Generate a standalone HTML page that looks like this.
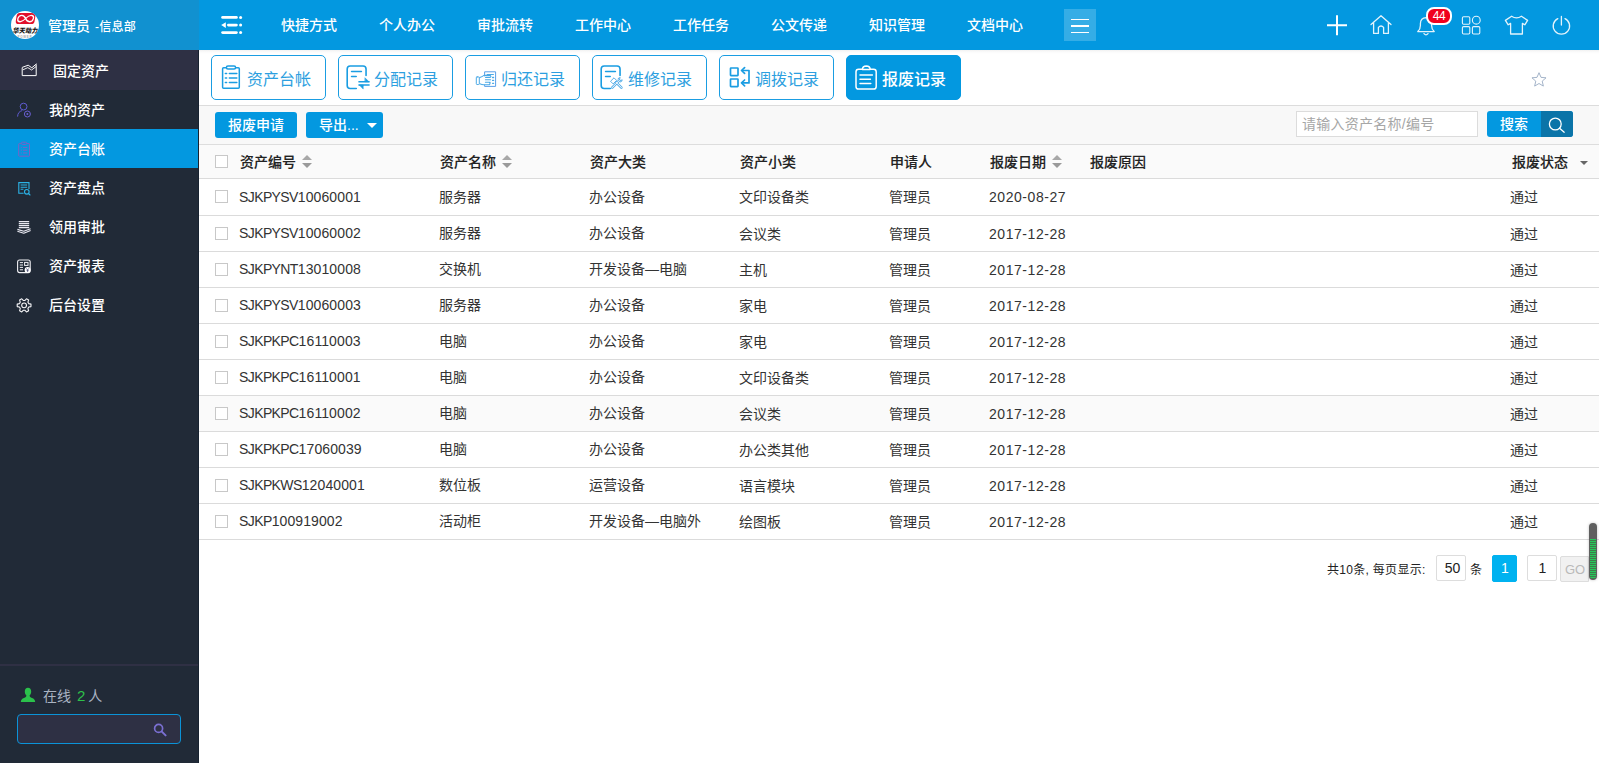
<!DOCTYPE html>
<html lang="zh-CN">
<head>
<meta charset="utf-8">
<title>固定资产 - 报废记录</title>
<style>
*{box-sizing:border-box;margin:0;padding:0}
html,body{width:1599px;height:763px;overflow:hidden;background:#fff}
body{font-family:"Liberation Sans","Noto Sans CJK SC",sans-serif;font-size:14px;color:#333;position:relative}
.abs{position:absolute}
/* sidebar */
#side{position:absolute;left:0;top:0;width:199px;height:763px;background:#212a37;font-weight:500}
#side .hd{position:absolute;left:0;top:0;width:199px;height:50px;background:#1191d0}
#side .logo{position:absolute;left:11px;top:11px;width:28px;height:28px;border-radius:50%;background:#fff;overflow:hidden}
#side .uname small{font-size:12px;margin-left:1px;letter-spacing:.3px}
#side .uname{position:absolute;left:48px;top:0;height:50px;line-height:52px;color:#fff;font-size:14px;white-space:nowrap}
#side .grp{position:absolute;left:0;top:50px;width:199px;height:40px;background:#2e3044;color:#fff}
#side .grp span{position:absolute;left:53px;top:0;line-height:43px;font-size:14px}
#side .it{position:absolute;left:0;width:199px;height:39px;color:#fff}
#side .it span{position:absolute;left:49px;top:0;line-height:41px;font-size:14px}
#side .it.on{background:#0398e0}
#side .it svg,#side .grp svg{position:absolute}
#side .sep{position:absolute;left:0;top:664px;width:198px;height:2px;background:#2f3044}
#side .edge{position:absolute;left:198px;top:50px;width:1px;height:713px;background:#172230}
#side .online{font-weight:normal;position:absolute;left:43px;top:685px;height:22px;line-height:22px;color:#a9b3c2;font-size:14px;white-space:nowrap}
#side .online b{color:#2ec14a;font-weight:normal;font-size:15px;margin:0 3px 0 6px}
#side .sbox{position:absolute;left:17px;top:714px;width:164px;height:30px;border:1px solid #0b93d8;border-radius:4px;background:#2e3044}
/* top bar */
#top{position:absolute;left:199px;top:0;width:1400px;height:50px;background:#0398e0;color:#fff}
#top .nav{position:absolute;top:0;height:50px;line-height:50px;font-size:14px;white-space:nowrap;font-weight:500}
#top .more{position:absolute;left:865px;top:9px;width:32px;height:32px;background:#35ade6}
#top .more b{position:absolute;left:6.6px;width:18.6px;height:1.8px;background:#fff}
.badge{position:absolute;left:1227px;top:7px;width:26px;height:18px;border:2px solid #fff;border-radius:8px;background:#f0001e;color:#fff;font-size:12px;line-height:14px;text-align:center;letter-spacing:-0.3px}
/* tab strip */
#tabs{position:absolute;left:199px;top:50px;width:1400px;height:56px;background:linear-gradient(to bottom,#f1f1f1 0,#fbfbfb 2px,#fff 4px) #fff;border-bottom:1px solid #dcdcdc}
.tb{position:absolute;top:5px;width:115px;height:45px;border:1px solid #1a9de2;border-radius:5px;color:#2d9fe0;font-size:16px;line-height:47px;white-space:nowrap;background:#fff}
.tb span{position:absolute;left:35px;top:0}
.tb svg{position:absolute}
.tb.on{font-weight:500;background:#0398e0;color:#fff;border-color:#0398e0}
/* toolbar */
#tool{position:absolute;left:199px;top:106px;width:1400px;height:39px;background:#f8f8f8;border-bottom:1px solid #dddddd}
.btn u{position:absolute;left:61px;top:11px;width:0;height:0;border-left:5px solid transparent;border-right:5px solid transparent;border-top:5px solid #fff}
.btn{font-weight:500;position:absolute;top:6px;height:26px;border-radius:3px;background:#0398e0;color:#fff;font-size:14px;line-height:26px;text-align:center;white-space:nowrap}
.sinp{letter-spacing:.25px;position:absolute;left:1097px;top:5px;width:182px;height:26px;border:1px solid #dcdcdc;background:#fff;color:#a6a6a6;font-size:14px;line-height:25px;padding-left:5px;white-space:nowrap}
.sbtn{position:absolute;left:1288px;top:5px;width:86px;height:26px;border-radius:3px;background:#0398e0;color:#fff;overflow:hidden}
.sbtn span{font-weight:500;position:absolute;left:13px;top:0;line-height:26px;font-size:14px}
.sbtn em{position:absolute;left:54px;top:0;width:32px;height:26px;background:#0b74a8}
/* grid */
#grid{position:absolute;left:199px;top:145px;width:1400px}
.row{position:absolute;left:0;width:1400px;height:36px;border-bottom:1px solid #dbdbdb;background:#fff;font-size:14px;line-height:36px;color:#333;white-space:nowrap}
.row.alt{background:#fafafa}
.row.h{height:34px;line-height:35px;background:#fafafa;font-weight:500;-webkit-text-stroke:0.12px #222;color:#222;top:0}
.row i{position:absolute;left:16px;top:11px;width:13px;height:13px;border:1px solid #c8c8c8;background:#fff}
.row.h i,.row.f i{top:10px}
.row.f{line-height:34px}
.row span{position:absolute;top:0}
.c1{left:40px;letter-spacing:.1px}
.c1 b{font-weight:normal;letter-spacing:-.6px}.c2{left:240px}.c3{left:390px}.c4{left:540px}.c5{left:690px}.c6{left:790px;letter-spacing:.55px}.c7{left:890px}.c8{left:1311px}
.row.h span{margin-left:1px;letter-spacing:0}
.row.h s{position:absolute;left:61.5px;top:10px;width:10px;height:13px;text-decoration:none}
.row.h s:before{content:"";position:absolute;left:0;top:0;border-left:5px solid transparent;border-right:5px solid transparent;border-bottom:5px solid #a8a8a8}
.row.h s:after{content:"";position:absolute;left:0;top:8px;border-left:5px solid transparent;border-right:5px solid transparent;border-top:5px solid #9a9a9a}
.row.h u{position:absolute;left:68px;top:16px;border-left:4.5px solid transparent;border-right:4.5px solid transparent;border-top:4.5px solid #666}
.row .c1,.row .c2,.row .c3{top:-1px}
.row.h .c1,.row.h .c2,.row.h .c3,.row.f .c1,.row.f .c2,.row.f .c3{top:0}
/* pager */
#pg{position:absolute;left:199px;top:540px;width:1400px;height:60px;font-size:13px;color:#222}
#pg span{position:absolute;white-space:nowrap}
.pbx{position:absolute;padding-left:1px;border:1px solid #dddddd;border-radius:2px;background:#fff;text-align:center;line-height:24px;font-size:14px;color:#222}
.pbx.cur{background:#00b2f0;border-color:#00b2f0;color:#fff;line-height:25px}
.pbx.go{background:#f1f1f1;border-color:#dddddd;color:#b9b9b9;font-size:13px;line-height:26px;border-radius:2px 0 0 2px}
#meter{position:absolute;left:1589px;top:523px;width:8px;height:57px;border-radius:4px;background:#5f5f5f;box-shadow:0 0 3px rgba(0,0,0,.25)}
#meter div{position:absolute;left:1px;top:16px;width:6px;height:40px;border-radius:0 0 3px 3px;background:repeating-linear-gradient(to bottom,#25c85a 0,#25c85a 1px,#3f7a4c 1px,#3f7a4c 2px)}
</style>
</head>
<body>
<div id="side">
  <div class="hd">
    <div class="logo"><svg width="28" height="28" viewBox="0 0 28 28">
      <path d="M8.6 1.9 H21.6 Q24.9 1.9 24.4 5 L23.6 10.2 Q23.1 13.1 20.2 13.1 H7.4 Q4.3 13.1 4.8 10 L5.6 4.8 Q6.1 1.9 8.6 1.9 Z" fill="#e10f2b"/>
      <path transform="translate(14.6 7.5) skewX(-14) translate(-14.6 -7.5)" d="M14.6 7.5 C12.8 4.8 11.6 4.3 10 4.3 C8.2 4.3 6.9 5.7 6.9 7.5 C6.9 9.3 8.2 10.7 10 10.7 C11.6 10.7 12.8 10.2 14.6 7.5 C16.4 4.8 17.8 4.3 19.3 4.3 C21.1 4.3 22.4 5.7 22.4 7.5 C22.4 9.3 21.1 10.7 19.3 10.7 C17.8 10.7 16.4 10.2 14.6 7.5 Z" fill="none" stroke="#fff" stroke-width="1.35"/>
      <text transform="translate(14 21.9) scale(0.52 0.56) skewX(-12)" text-anchor="middle" font-family="'Liberation Sans','Noto Sans CJK SC',sans-serif" font-weight="900" font-size="12" fill="#111">华天动力</text>
      <text transform="translate(14 27) scale(0.25)" text-anchor="middle" font-family="'Liberation Sans',sans-serif" font-weight="bold" font-size="12" letter-spacing="3" fill="#a8a8a8">POWER</text>
    </svg></div>
    <div class="uname">管理员 <small>-信息部</small></div>
  </div>
  <div class="grp"><svg style="left:18px;top:10px" width="24" height="20" viewBox="0 0 24 20" fill="none" stroke="#fff" stroke-width="1" stroke-linejoin="round">
      <path d="M4.2 7.6 V15.6 H18.2 V4.4"/>
      <path d="M4.2 7.4 L10.2 5.2 L13.8 7.8 L18.6 3.8"/>
      <path d="M5 9.8 L9.8 7.6 L13.6 10 L18 6.6" stroke-width="0.9"/>
    </svg><span>固定资产</span></div>
  <div class="it" style="top:90px"><svg style="left:14px;top:8px" width="24" height="24" viewBox="0 0 24 24" fill="none" stroke="#5f5bd0" stroke-width="1">
      <circle cx="9.6" cy="8.6" r="3.4"/>
      <path d="M3.6 18.6 Q3.8 13.6 8.2 12.6"/>
      <circle cx="13.4" cy="16" r="3" stroke="#6a5fd2"/>
      <circle cx="13.4" cy="16" r="1" fill="#6a5fd2" stroke="none"/>
    </svg><span>我的资产</span></div>
  <div class="it on" style="top:129px"><svg style="left:14px;top:8px" width="24" height="24" viewBox="0 0 24 24" fill="none" stroke="#7a62c6" stroke-width="1">
      <rect x="4.7" y="6.6" width="10.8" height="12.6" rx="0.6"/>
      <rect x="7.4" y="5.2" width="5.4" height="2.2" rx="1.1" fill="#0398e0"/>
      <path d="M6.8 10.4 H7.8 M9 10.4 H13.4 M6.8 13.2 H7.8 M9 13.2 H13.4 M6.8 16 H7.8 M9 16 H13.4"/>
    </svg><span>资产台账</span></div>
  <div class="it" style="top:168px"><svg style="left:14px;top:8px" width="24" height="24" viewBox="0 0 24 24" fill="none" stroke="#2bb3e6" stroke-width="1.1">
      <path d="M9.6 17.2 H4.8 V6.6 H15 V13"/>
      <path d="M6.6 9 H13.2 M6.6 11.2 H13.2 M6.6 13.3 H9.4"/>
      <circle cx="12.8" cy="15.8" r="2.3"/>
      <path d="M14.5 17.5 L16 19" stroke-linecap="round"/>
    </svg><span>资产盘点</span></div>
  <div class="it" style="top:207px"><svg style="left:14px;top:8px" width="24" height="24" viewBox="0 0 24 24" fill="none" stroke="#e9e9f2" stroke-width="1.1" stroke-linejoin="round">
      <path d="M4.8 6.6 H15.2 M4.8 8.6 H15.2 M4.8 10.6 H15.2 M4.8 12.6 H15.2"/>
      <path d="M3.4 14.4 L9.8 16.2 L16.6 13.8 M3.4 16.2 L9.8 18.2 L16.6 15.6" />
    </svg><span>领用审批</span></div>
  <div class="it" style="top:246px"><svg style="left:14px;top:8px" width="24" height="24" viewBox="0 0 24 24" fill="none" stroke="#f0f0f4" stroke-width="1.1">
      <rect x="3.6" y="6" width="12.6" height="12.6" rx="2"/>
      <path d="M5.8 8.6 H9 M5.8 11 H9 M5.8 13.4 H9 M5.8 15.8 H9" stroke-width="1"/>
      <rect x="10.6" y="8.4" width="3.4" height="3" stroke-width="1"/>
      <circle cx="13.6" cy="16" r="3" fill="#fff" stroke="none"/>
      <path d="M12.4 14.4 L13.6 16 L14.8 14.4 M13.6 16 V18 M12.6 16.6 H14.6" stroke="#3b3f6a" stroke-width="0.7"/>
    </svg><span>资产报表</span></div>
  <div class="it" style="top:285px"><svg style="left:14px;top:8px" width="24" height="24" viewBox="0 0 24 24" fill="none" stroke="#f4f4f6" stroke-width="1.1" stroke-linejoin="round">
      <path d="M16.99 11.11 L16.99 13.59 L14.80 14.04 L13.92 15.58 L14.62 17.70 L12.47 18.94 L10.99 17.27 L9.21 17.27 L7.73 18.94 L5.58 17.70 L6.28 15.58 L5.40 14.04 L3.21 13.59 L3.21 11.11 L5.40 10.66 L6.28 9.12 L5.58 7.00 L7.73 5.76 L9.21 7.43 L10.99 7.43 L12.47 5.76 L14.62 7.00 L13.92 9.12 L14.80 10.66 Z"/>
      <circle cx="10.1" cy="12.35" r="2.4"/>
    </svg><span>后台设置</span></div>
  <div class="sep"></div><div class="edge"></div>
  <svg class="abs" style="left:20px;top:687px" width="16" height="16" viewBox="0 0 16 16"><path d="M8 0.8 C10 0.8 11.2 2.4 11.2 4.6 C11.2 6.4 10.4 7.8 9.6 8.6 C9.6 9.8 10.4 10.4 12 11 C14 11.8 15 12.6 15.2 15 H0.8 C1 12.6 2 11.8 4 11 C5.6 10.4 6.4 9.8 6.4 8.6 C5.6 7.8 4.8 6.4 4.8 4.6 C4.8 2.4 6 0.8 8 0.8 Z" fill="#2bc14b"/></svg>
  <div class="online">在线<b>2</b>人</div>
  <div class="sbox"><svg class="abs" style="left:132px;top:5px" width="20" height="20" viewBox="0 0 20 20" fill="none" stroke="#7a6fd2" stroke-width="1.7" stroke-linecap="round"><circle cx="8.6" cy="8.4" r="4"/><path d="M11.8 11.6 L15.6 15.4" stroke-width="2"/></svg></div>
</div>

<div id="top">
  <div class="nav" style="left:82px">快捷方式</div>
  <div class="nav" style="left:180px">个人办公</div>
  <div class="nav" style="left:278px">审批流转</div>
  <div class="nav" style="left:376px">工作中心</div>
  <div class="nav" style="left:474px">工作任务</div>
  <div class="nav" style="left:572px">公文传递</div>
  <div class="nav" style="left:670px">知识管理</div>
  <div class="nav" style="left:768px">文档中心</div>
  <div class="more"><b style="top:9.5px"></b><b style="top:16.2px"></b><b style="top:22.5px"></b></div>
  <svg class="abs" style="left:18px;top:12px" width="30" height="26" viewBox="0 0 30 26" fill="#fff">
    <rect x="4.2" y="4" width="16.6" height="2.8" rx="1.4"/><circle cx="23.6" cy="5.4" r="1.5"/>
    <rect x="10" y="11.7" width="10.8" height="2.8" rx="1.4"/><circle cx="23.6" cy="13.1" r="1.5"/>
    <path d="M4.2 13.1 L8.8 10.3 L8.8 15.9 Z"/>
    <rect x="4.2" y="19.2" width="16.6" height="2.8" rx="1.4"/><circle cx="23.6" cy="20.6" r="1.5"/>
  </svg>
  <svg class="abs" style="left:1120px;top:8px" width="270" height="36" viewBox="0 0 270 36" fill="none" stroke="#e4f3fb" stroke-width="1.3" stroke-linecap="round" stroke-linejoin="round">
    <!-- plus -->
    <path d="M8 17.2 H28 M18 7.2 V27.2" stroke="#fff" stroke-width="2" stroke-linecap="butt"/>
    <!-- home -->
    <path d="M52 16.6 L62 7.8 L72 16.6 M54.6 14.6 V25.4 H59.4 V19.4 Q62 16.6 64.6 19.4 V25.4 H69.4 V14.6"/>
    <!-- bell -->
    <path d="M98.8 23.6 H115.2 Q112.6 21.4 112.6 17.6 V15.4 Q112.4 10 107 9.6 Q101.6 10 101.4 15.4 V17.6 Q101.4 21.4 98.8 23.6 Z M105 25.6 Q107 28 109 25.6"/>
    <!-- grid -->
    <rect x="143.4" y="8.8" width="7.4" height="7.4" rx="1.2" stroke-width="1.1"/>
    <circle cx="157.3" cy="12.2" r="3.9" stroke-width="1.1"/>
    <rect x="143.4" y="18.6" width="7.4" height="7.4" rx="1.2" stroke-width="1.1"/>
    <rect x="153.4" y="18.6" width="7.4" height="7.4" rx="1.2" stroke-width="1.1"/>
    <!-- shirt -->
    <path d="M192.6 8.2 Q197.5 11.6 202.4 8.2 L208.6 12.4 L205.8 16.8 L203.4 15.4 V26 H191.6 V15.4 L189.2 16.8 L186.4 12.4 Z"/>
    <!-- power -->
    <path d="M238.8 10.6 A8.2 8.2 0 1 0 246 10.6 M242.4 8.4 V17"/>
  </svg>
  <div class="badge">44</div>
</div>

<div id="tabs">
  <div class="tb" style="left:12px"><svg style="left:3px;top:2px" width="40" height="40" viewBox="0 0 40 40" fill="none" stroke="#1a9de2" stroke-width="1.5" stroke-linecap="round">
      <rect x="7.6" y="9.7" width="16.7" height="20.6" rx="1"/>
      <rect x="11.4" y="7.9" width="9.2" height="3.1" rx="1.55" fill="#fff"/>
      <path d="M10.4 15.5 H11.6 M14.4 15.5 H21.8 M10.4 20 H11.6 M14.4 20 H21.8 M10.4 24.5 H11.6 M14.4 24.5 H21.8" stroke-width="1.6"/>
    </svg><span>资产台帐</span></div>
  <div class="tb" style="left:139px"><svg style="left:1px;top:2px" width="40" height="40" viewBox="0 0 40 40" fill="none" stroke="#1a9de2" stroke-width="1.6" stroke-linecap="round" stroke-linejoin="round">
      <path d="M26.05 17.4 V11 Q26.05 8 23.05 8 H10.2 Q7.2 8 7.2 11 V27.5 Q7.2 30.5 10.2 30.5 H16.3 M11.6 13.5 H21.4 M11.6 18.5 H16.2"/>
      <path d="M18.4 23.7 H29.6 M18.4 27 H29.6" stroke-linecap="butt"/>
      <path d="M25.2 20 L28.9 23.7 H25.2 Z M23 30.8 L19.3 27 H23 Z" fill="#1a9de2" stroke-width="0.6"/>
    </svg><span>分配记录</span></div>
  <div class="tb" style="left:266px"><svg style="left:1px;top:2px" width="40" height="40" viewBox="0 0 40 40" fill="none" stroke="#4aa9e6" stroke-width="1" stroke-linecap="round" stroke-linejoin="round">
      <path d="M17.6 18 V13.8 H28.6 V28.4 H17.6 V27" stroke="#5b9fe8"/>
      <path d="M20.2 16.5 H26.4" stroke-width="1.2"/>
      <path d="M25.6 19.5 H26.6 M25.6 22.4 H26.6 M25.6 25.3 H26.6" stroke-width="1.3"/>
      <rect x="9.3" y="18.9" width="3" height="7.6" rx="0.8"/>
      <path d="M12.8 19.6 Q15 18.6 17 17.4 H23.2 Q24.6 18.4 23.2 19.4 H18.6 M18.4 21.8 H23.6 M18.4 24.2 H23.2 M12.8 25.8 Q15 26.6 16.6 26.8 H22.4 Q23.6 25.6 22.4 24.4" stroke-width="1.1"/>
    </svg><span>归还记录</span></div>
  <div class="tb" style="left:393px"><svg style="left:1px;top:2px" width="40" height="40" viewBox="0 0 40 40" fill="none" stroke="#1a9de2" stroke-width="1.6" stroke-linecap="round" stroke-linejoin="round">
      <path d="M26.05 17.4 V11 Q26.05 8 23.05 8 H10.2 Q7.2 8 7.2 11 V27.5 Q7.2 30.5 10.2 30.5 H16.3 M11.6 13.5 H21.4 M11.6 18.5 H16.2"/>
      <g stroke="#57aee9" stroke-width="2.6"><path d="M18.2 29.6 L25.4 22.4 M27.4 29.6 L20.6 22.8"/></g>
      <g stroke="#fff" stroke-width="1"><path d="M18.2 29.6 L25.4 22.4 M27.4 29.6 L20.6 22.8"/></g>
      <g stroke="#57aee9" stroke-width="1"><path d="M16.8 23 L20 19.8 L22.6 22.4 L19.4 25.6 Z" fill="#fff"/><path d="M24 21 Q24.4 19.4 26.2 19.6 L25.4 21.4 L26.6 22.6 L28.2 21.8 Q28.2 23.8 26.4 24" /></g>
    </svg><span>维修记录</span></div>
  <div class="tb" style="left:520px"><svg style="left:1px;top:2px" width="40" height="40" viewBox="0 0 40 40" fill="none" stroke="#1a9de2" stroke-width="1.7" stroke-linejoin="round">
      <rect x="9.5" y="10" width="7.5" height="7.6" rx="0.5"/>
      <rect x="9.5" y="21" width="7.5" height="7.6" rx="0.5"/>
      <path d="M21 12.5 H28 V24.9 H21" />
      <path d="M23.6 9.6 L20.5 12.5 L23.6 15.4 M23.6 22 L20.5 24.9 L23.6 27.8" stroke-linecap="round"/>
    </svg><span>调拨记录</span></div>
  <svg class="abs" style="left:1321px;top:10px" width="40" height="40" viewBox="0 0 40 40"><polygon points="19.00,12.70 21.00,17.35 26.04,17.81 22.23,21.15 23.35,26.09 19.00,23.50 14.65,26.09 15.77,21.15 11.96,17.81 17.00,17.35" fill="none" stroke="#93a7bf" stroke-width="0.85" stroke-linejoin="round"/></svg>
  <div class="tb on" style="left:647px"><svg style="left:-1px;top:-1px" width="40" height="45" viewBox="0 0 40 45" fill="none" stroke="#fff" stroke-width="1.5" stroke-linecap="round" stroke-linejoin="round">
      <path d="M16.2 14.2 H12.6 Q10 14.2 10 16.8 V31.4 Q10 34 12.6 34 H27.6 Q30.2 34 30.2 31.4 V16.8 Q30.2 14.2 27.6 14.2 H24.4"/>
      <path d="M16.4 14.4 Q16.6 11.2 20.3 11.1 Q24 11.2 24.2 14.4 Z"/>
      <path d="M14 19.9 H26.4 M14 24.2 H24.4 M14 28.4 H24.8"/>
    </svg><span>报废记录</span></div>
</div>

<div id="tool">
  <div class="btn" style="left:16px;width:82px">报废申请</div>
  <div class="sinp">请输入资产名称/编号</div>
  <div class="sbtn"><span>搜索</span><em><svg width="32" height="26" viewBox="0 0 32 26" fill="none" stroke="#fff" stroke-width="1.3" stroke-linecap="round"><circle cx="14.3" cy="13" r="5.9"/><path d="M18.6 17.3 L23.2 21.2"/></svg></em></div>
  <div class="btn" style="left:107px;width:77px;text-align:left;padding-left:13px">导出...<u></u></div>
</div>

<div id="grid">
  <div class="row h"><i></i><span class="c1">资产编号<s></s></span><span class="c2">资产名称<s></s></span><span class="c3">资产大类</span><span class="c4">资产小类</span><span class="c5">申请人</span><span class="c6">报废日期<s></s></span><span class="c7">报废原因</span><span class="c8" style="left:1312px">报废状态<u></u></span></div>
  <div class="row f" style="top:35px"><i></i><span class="c1"><b>SJKPYSV</b>10060001</span><span class="c2">服务器</span><span class="c3">办公设备</span><span class="c4">文印设备类</span><span class="c5">管理员</span><span class="c6">2020-08-27</span><span class="c8">通过</span></div>
  <div class="row" style="top:71px"><i></i><span class="c1"><b>SJKPYSV</b>10060002</span><span class="c2">服务器</span><span class="c3">办公设备</span><span class="c4">会议类</span><span class="c5">管理员</span><span class="c6">2017-12-28</span><span class="c8">通过</span></div>
  <div class="row" style="top:107px"><i></i><span class="c1"><b>SJKPYNT</b>13010008</span><span class="c2">交换机</span><span class="c3">开发设备—电脑</span><span class="c4">主机</span><span class="c5">管理员</span><span class="c6">2017-12-28</span><span class="c8">通过</span></div>
  <div class="row" style="top:143px"><i></i><span class="c1"><b>SJKPYSV</b>10060003</span><span class="c2">服务器</span><span class="c3">办公设备</span><span class="c4">家电</span><span class="c5">管理员</span><span class="c6">2017-12-28</span><span class="c8">通过</span></div>
  <div class="row" style="top:179px"><i></i><span class="c1"><b>SJKPKPC</b>16110003</span><span class="c2">电脑</span><span class="c3">办公设备</span><span class="c4">家电</span><span class="c5">管理员</span><span class="c6">2017-12-28</span><span class="c8">通过</span></div>
  <div class="row" style="top:215px"><i></i><span class="c1"><b>SJKPKPC</b>16110001</span><span class="c2">电脑</span><span class="c3">办公设备</span><span class="c4">文印设备类</span><span class="c5">管理员</span><span class="c6">2017-12-28</span><span class="c8">通过</span></div>
  <div class="row alt" style="top:251px"><i></i><span class="c1"><b>SJKPKPC</b>16110002</span><span class="c2">电脑</span><span class="c3">办公设备</span><span class="c4">会议类</span><span class="c5">管理员</span><span class="c6">2017-12-28</span><span class="c8">通过</span></div>
  <div class="row" style="top:287px"><i></i><span class="c1"><b>SJKPKPC</b>17060039</span><span class="c2">电脑</span><span class="c3">办公设备</span><span class="c4">办公类其他</span><span class="c5">管理员</span><span class="c6">2017-12-28</span><span class="c8">通过</span></div>
  <div class="row" style="top:323px"><i></i><span class="c1"><b>SJKPKWS</b>12040001</span><span class="c2">数位板</span><span class="c3">运营设备</span><span class="c4">语言模块</span><span class="c5">管理员</span><span class="c6">2017-12-28</span><span class="c8">通过</span></div>
  <div class="row" style="top:359px"><i></i><span class="c1"><b>SJKP</b>100919002</span><span class="c2">活动柜</span><span class="c3">开发设备—电脑外</span><span class="c4">绘图板</span><span class="c5">管理员</span><span class="c6">2017-12-28</span><span class="c8">通过</span></div>
</div>

<div id="pg">
  <span style="left:1128px;top:19px;line-height:22px;font-size:12px;letter-spacing:.3px">共10条, 每页显示:</span>
  <div class="pbx" style="left:1237px;width:30px;top:15px;height:26px;padding-left:3px">50</div>
  <span style="left:1271px;top:19px;line-height:22px;font-size:12px">条</span>
  <div class="pbx cur" style="left:1293px;width:25px;top:15px;height:27px">1</div>
  <div class="pbx" style="left:1328px;width:30px;top:15px;height:26px">1</div>
  <div class="pbx go" style="left:1361px;width:29px;top:16px;height:26px">GO</div>
</div>
<div id="meter"><div></div></div>
</body>
</html>
